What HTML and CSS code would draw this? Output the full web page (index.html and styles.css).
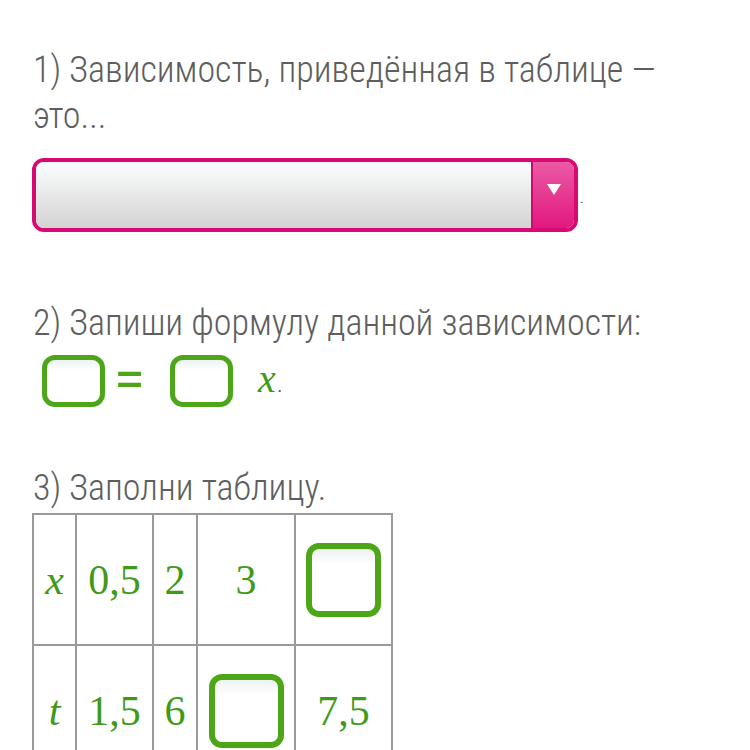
FILE: index.html
```html
<!DOCTYPE html>
<html>
<head>
<meta charset="utf-8">
<link rel="stylesheet" href="styles.css">
</head>
<body>
<div class="page">
  <p class="q q1">1) Зависимость, приведённая в таблице —<br>это...</p>
  <div class="select-row">
    <div class="select">
      <div class="select-field"></div>
      <div class="select-btn"><span class="tri"></span></div>
    </div>
    <span class="dot">.</span>
  </div>
  <p class="q q2">2) Запиши формулу данной зависимости:</p>
  <div class="formula">
    <span class="box"></span>
    <span class="eq">=</span>
    <span class="box"></span>
    <span class="var">x</span><span class="per">.</span>
  </div>
  <p class="q q3">3) Заполни таблицу.</p>
  <table class="tbl">
    <tr>
      <td class="c1"><span class="var">x</span></td>
      <td class="c2">0,5</td>
      <td class="c3">2</td>
      <td class="c4">3</td>
      <td class="c5"><span class="box big"></span></td>
    </tr>
    <tr>
      <td class="c1"><span class="var">t</span></td>
      <td class="c2">1,5</td>
      <td class="c3">6</td>
      <td class="c4"><span class="box big"></span></td>
      <td class="c5">7,5</td>
    </tr>
  </table>
</div>
</body>
</html>
```

FILE: styles.css
```css
html, body {
  margin: 0;
  padding: 0;
  background: #ffffff;
}
.page {
  padding: 47px 0 0 33px;
  font-family: "Roboto Condensed", Roboto, "Liberation Sans", sans-serif;
  font-weight: 300;
  font-stretch: 75%;
  color: #5e5e5e;
}
.q {
  margin: 0;
  font-size: 36px;
  line-height: 46px;
  white-space: nowrap;
}
.select-row {
  display: flex;
  align-items: flex-end;
  margin-top: 19px;
}
.select {
  box-sizing: border-box;
  width: 546px;
  height: 74px;
  border: 4px solid #d70a73;
  border-radius: 12px;
  display: flex;
  overflow: hidden;
  margin-left: -1px;
}
.select-field {
  flex: 1;
  background: linear-gradient(#fbfcfd, #d3d3d3);
  border-top: 2px solid #f6f8fa;
}
.select-btn {
  width: 43px;
  box-sizing: border-box;
  border-left: 2px solid #cf0a6c;
  background: linear-gradient(#ea5aa4, #e2187f);
  display: flex;
  justify-content: center;
  padding-top: 22px;
}
.tri {
  width: 0;
  height: 0;
  border-left: 7px solid transparent;
  border-right: 7px solid transparent;
  border-top: 11px solid #ffffff;
}
.dot {
  font-size: 16px;
  line-height: 16px;
  color: #333;
  margin: 0 0 26px 2px;
}
.q2 {
  margin-top: 68px;
}
.formula {
  display: flex;
  align-items: center;
  height: 54px;
  margin-top: 8px;
  padding-left: 9px;
}
.box {
  display: inline-block;
  box-sizing: border-box;
  width: 63px;
  height: 52px;
  border: 5px solid #4ca617;
  border-radius: 13px;
  background: linear-gradient(#eef2f4, #ffffff 25%);
}
.eq {
  box-sizing: border-box;
  font-family: Roboto, "Liberation Sans", sans-serif;
  font-stretch: 100%;
  font-size: 56px;
  color: #4ca617;
  width: 65px;
  padding-left: 9px;
  text-align: left;
  font-weight: 400;
  line-height: 40px;
  margin-top: -4px;
}
.var {
  font-family: "Liberation Serif", serif;
  font-style: italic;
  color: #3f9a1a;
  font-weight: 400;
}
.formula .var {
  font-size: 40px;
  margin-left: 25px;
  margin-top: -6px;
}
.per {
  font-size: 26px;
  color: #555;
  align-self: flex-end;
  margin-bottom: 10px;
  margin-left: 1px;
}
.q3 {
  margin-top: 57px;
}
.tbl {
  border-collapse: collapse;
  table-layout: fixed;
  margin-top: 2px;
  margin-left: -1px;
}
.tbl td {
  border: 2px solid #9a9a9a;
  height: 129px;
  padding: 0;
  text-align: center;
  vertical-align: middle;
  font-family: "Liberation Serif", serif;
  font-size: 42px;
  color: #3f9a1a;
}
.tbl .var {
  font-size: 42px;
}
.c1 { width: 41px; }
.c2 { width: 75px; }
.c3 { width: 42px; }
.c4 { width: 96px; }
.c5 { width: 95px; }
.box.big {
  width: 75px;
  height: 74px;
  border-width: 6px;
  border-radius: 13px;
  vertical-align: middle;
}
```
